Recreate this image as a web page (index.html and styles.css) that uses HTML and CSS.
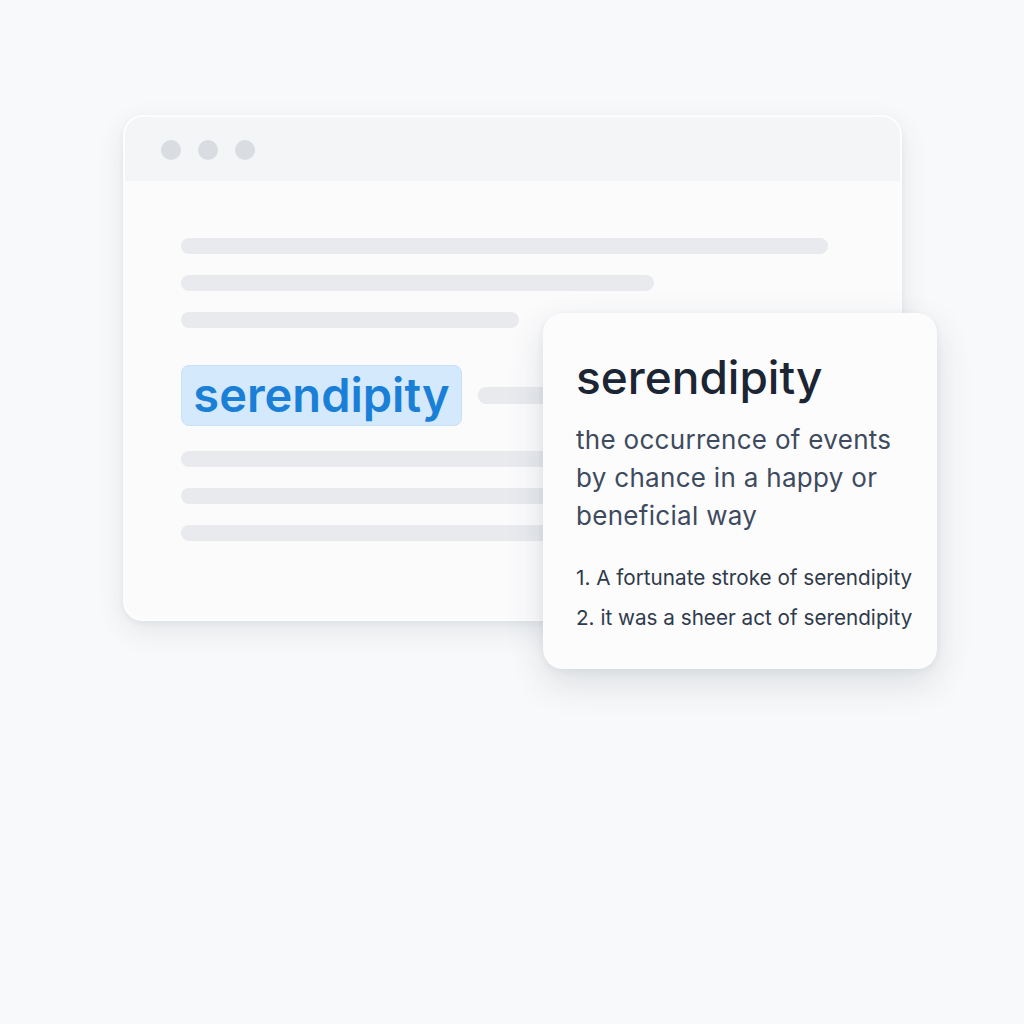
FILE: index.html
```html
<!DOCTYPE html>
<html lang="en">
<head>
<meta charset="utf-8">
<title>Serendipity definition</title>
<link rel="stylesheet" href="styles.css">
</head>
<body>
<div class="scene">
  <div class="window">
    <div class="titlebar">
      <span class="dot"></span><span class="dot"></span><span class="dot"></span>
    </div>
    <div class="content">
      <div class="line w1"></div>
      <div class="line w2"></div>
      <div class="line w3"></div>
      <div class="word-row">
        <span class="highlight">serendipity</span>
        <div class="line w4"></div>
      </div>
      <div class="lower">
        <div class="line w5"></div>
        <div class="line w5"></div>
        <div class="line w5"></div>
      </div>
    </div>
  </div>
  <div class="card">
    <h1 class="term">serendipity</h1>
    <p class="definition">the occurrence of events by chance in a happy or beneficial way</p>
    <ol class="examples">
      <li>1. A fortunate stroke of serendipity</li>
      <li>2. it was a sheer act of serendipity</li>
    </ol>
  </div>
</div>
</body>
</html>
```

FILE: styles.css
```css
html, body {
  margin: 0;
  padding: 0;
}
body {
  background: #f8f9fa;
  font-family: Inter, "Noto Sans", sans-serif;
  width: 1024px;
  height: 1024px;
  overflow: hidden;
}
.scene {
  position: relative;
  padding: 115px 0 0 123px;
}
.window {
  width: 779px;
  height: 506px;
  box-sizing: border-box;
  background: #fbfbfc;
  border: 2px solid #fdfdfe;
  border-radius: 20px;
  box-shadow: 0 10px 28px rgba(40, 55, 80, 0.10), 0 2px 6px rgba(40, 55, 80, 0.05);
  overflow: hidden;
}
.titlebar {
  height: 64px;
  box-sizing: border-box;
  padding: 2px 0 0 36px;
  background: #f3f5f7;
  display: flex;
  align-items: center;
  gap: 17px;
}
.dot {
  width: 20px;
  height: 20px;
  border-radius: 50%;
  background: #d9dce1;
}
.content {
  padding: 57px 0 0 56px;
  display: flex;
  flex-direction: column;
  align-items: flex-start;
}
.line {
  height: 16px;
  border-radius: 8px;
  background: #e8eaee;
}
.w1 { width: 647px; }
.w2 { width: 473px; margin-top: 21px; }
.w3 { width: 338px; margin-top: 21px; }
.word-row {
  margin-top: 37px;
  display: flex;
  align-items: center;
  gap: 16px;
}
.highlight {
  display: block;
  width: 281px;
  height: 61px;
  box-sizing: border-box;
  background: #d4e9fb;
  border: 1px solid #c8e1f7;
  border-radius: 8px;
  color: #1a7fd6;
  font-size: 47px;
  font-weight: 600;
  line-height: 57px;
  text-align: center;
  letter-spacing: 0;
}
.w4 { width: 200px; height: 17px; }
.lower {
  margin-top: 25px;
  display: flex;
  flex-direction: column;
  gap: 21px;
}
.w5 { width: 560px; }
.card {
  position: absolute;
  left: 543px;
  top: 313px;
  width: 394px;
  height: 356px;
  box-sizing: border-box;
  background: #fcfcfd;
  border-radius: 20px;
  box-shadow: 0 14px 36px rgba(40, 55, 80, 0.14), 0 2px 8px rgba(40, 55, 80, 0.06);
  padding: 32px 10px 0 33px;
}
.term {
  margin: 0;
  font-size: 46px;
  font-weight: 500;
  color: #1b2533;
  line-height: 64px;
}
.definition {
  margin: 12px 0 0;
  font-size: 26px;
  font-weight: 400;
  line-height: 38px;
  color: #3e4b5e;
  letter-spacing: 0.3px;
}
.examples {
  list-style: none;
  margin: 23px 0 0;
  padding: 0;
  font-size: 20.7px;
  line-height: 40px;
  color: #2f3a4b;
}
```
